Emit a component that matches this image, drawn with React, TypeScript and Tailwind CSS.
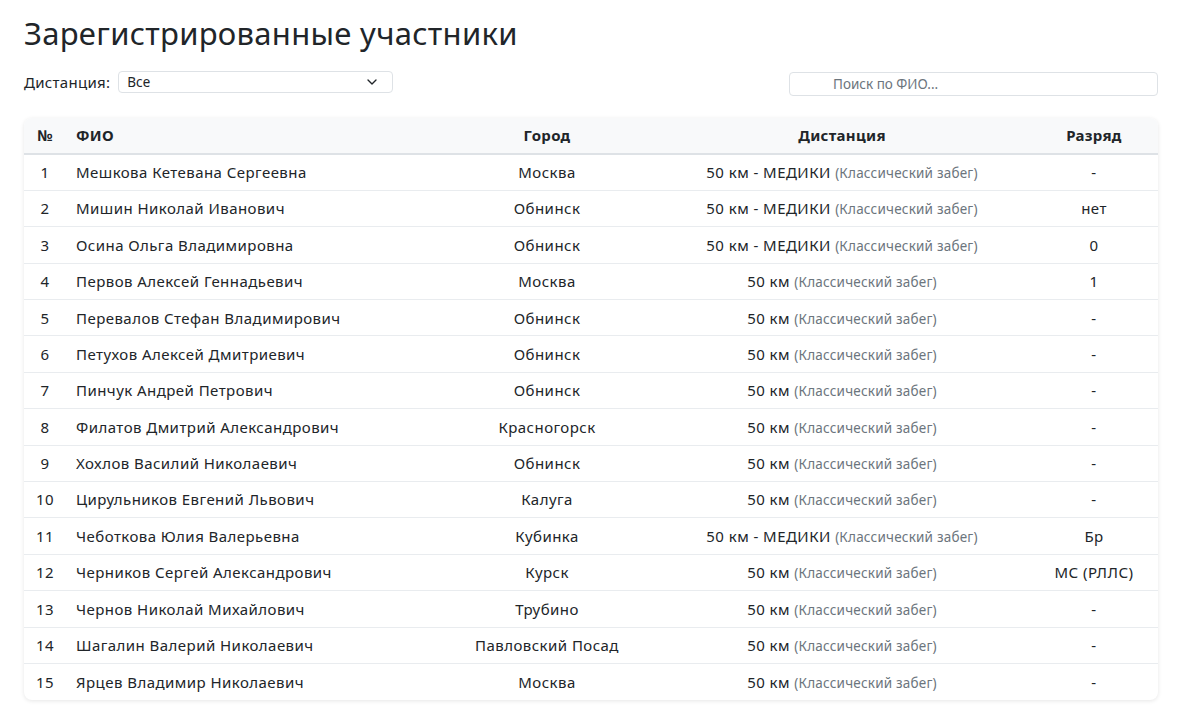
import { ChevronDown } from 'lucide-react'

type Runner = {
  name: string
  city: string
  medics: boolean
  rank: string
}

const runners: Runner[] = [
  { name: 'Мешкова Кетевана Сергеевна', city: 'Москва', medics: true, rank: '-' },
  { name: 'Мишин Николай Иванович', city: 'Обнинск', medics: true, rank: 'нет' },
  { name: 'Осина Ольга Владимировна', city: 'Обнинск', medics: true, rank: '0' },
  { name: 'Первов Алексей Геннадьевич', city: 'Москва', medics: false, rank: '1' },
  { name: 'Перевалов Стефан Владимирович', city: 'Обнинск', medics: false, rank: '-' },
  { name: 'Петухов Алексей Дмитриевич', city: 'Обнинск', medics: false, rank: '-' },
  { name: 'Пинчук Андрей Петрович', city: 'Обнинск', medics: false, rank: '-' },
  { name: 'Филатов Дмитрий Александрович', city: 'Красногорск', medics: false, rank: '-' },
  { name: 'Хохлов Василий Николаевич', city: 'Обнинск', medics: false, rank: '-' },
  { name: 'Цирульников Евгений Львович', city: 'Калуга', medics: false, rank: '-' },
  { name: 'Чеботкова Юлия Валерьевна', city: 'Кубинка', medics: true, rank: 'Бр' },
  { name: 'Черников Сергей Александрович', city: 'Курск', medics: false, rank: 'МС (РЛЛС)' },
  { name: 'Чернов Николай Михайлович', city: 'Трубино', medics: false, rank: '-' },
  { name: 'Шагалин Валерий Николаевич', city: 'Павловский Посад', medics: false, rank: '-' },
  { name: 'Ярцев Владимир Николаевич', city: 'Москва', medics: false, rank: '-' },
]

export default function App() {
  return (
    <div className="min-h-screen bg-white font-['Noto_Sans',sans-serif] text-[#212529]">
      <div className="w-[1182px] px-6 pt-[12px]">
        <h1 className="text-[31px] leading-[42px] tracking-[0.3px]">Зарегистрированные участники</h1>

        <div className="mt-[14px] flex items-center justify-between">
          <div className="flex items-center gap-2">
            <span className="text-[15px] tracking-[0.3px]">Дистанция:</span>
            <div className="flex h-[22px] w-[275px] items-center justify-between rounded border border-[#dee2e6] pl-2 pr-3 text-[13.5px]">
              <span>Все</span>
              <ChevronDown className="h-4 w-4" strokeWidth={2} />
            </div>
          </div>
          <div className="mt-1 flex h-[24px] w-[369px] items-center rounded border border-[#dee2e6] pl-[43px] text-[13.5px] text-[#6c757d]">
            Поиск по ФИО...
          </div>
        </div>

        <div className="mt-[22px] overflow-hidden rounded-lg shadow-[0_1px_4px_rgba(0,0,0,0.1)]">
          <table className="w-full table-fixed border-collapse text-[15px] tracking-[0.45px]">
            <colgroup>
              <col className="w-[42px]" />
              <col className="w-[374px]" />
              <col className="w-[214px]" />
              <col className="w-[376px]" />
              <col className="w-[128px]" />
            </colgroup>
            <thead>
              <tr className="h-[36px] border-b-2 border-[#dee2e6] bg-[#f8f9fa] font-bold tracking-[0.3px]">
                <th className="text-center">№</th>
                <th className="pl-[10px] text-left">ФИО</th>
                <th className="text-center">Город</th>
                <th className="text-center">Дистанция</th>
                <th className="text-center">Разряд</th>
              </tr>
            </thead>
            <tbody>
              {runners.map((r, i) => (
                <tr key={r.name} className="h-[36.4px] border-b border-[#e9ecef] last:border-b-0">
                  <td className="text-center">{i + 1}</td>
                  <td className="pl-[10px]">{r.name}</td>
                  <td className="text-center">{r.city}</td>
                  <td className="text-center">
                    {r.medics ? '50 км - МЕДИКИ' : '50 км'}{' '}
                    <span className="text-[13.5px] tracking-[0.2px] text-[#6c757d]">(Классический забег)</span>
                  </td>
                  <td className="text-center">{r.rank}</td>
                </tr>
              ))}
            </tbody>
          </table>
        </div>
      </div>
    </div>
  )
}
